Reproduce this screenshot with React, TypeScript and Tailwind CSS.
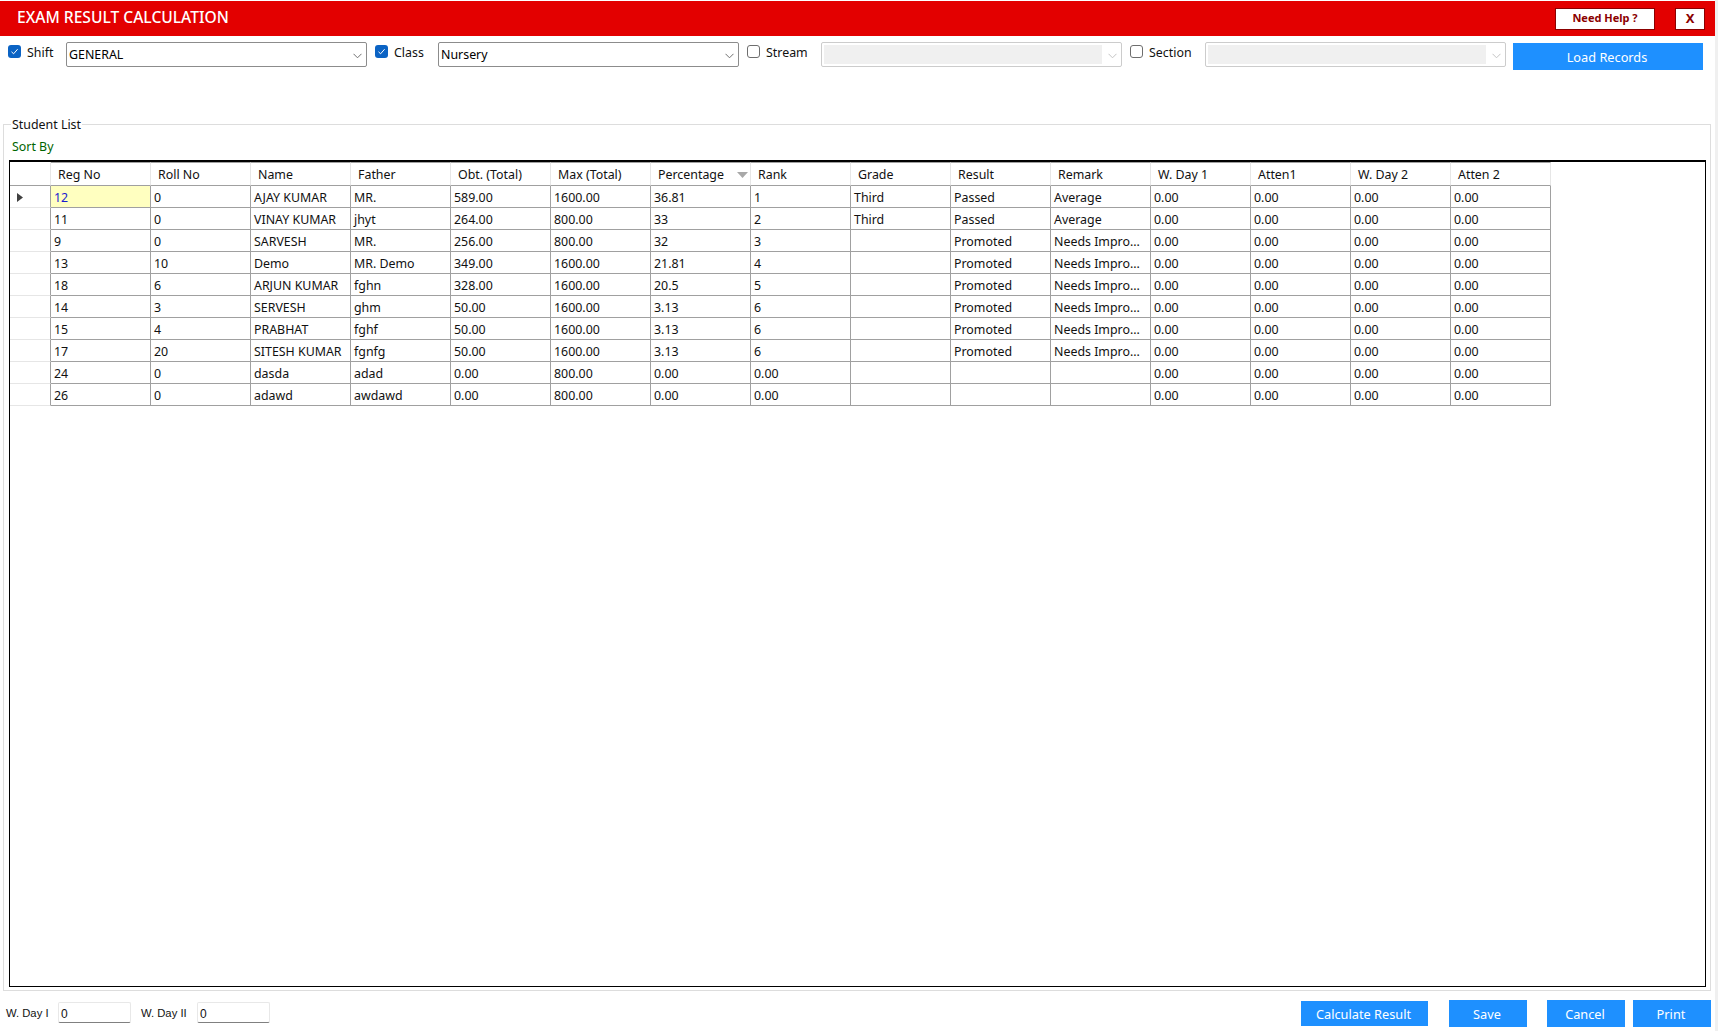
import React from "react";

const columns = ["Reg No","Roll No","Name","Father","Obt. (Total)","Max (Total)","Percentage","Rank","Grade","Result","Remark","W. Day 1","Atten1","W. Day 2","Atten 2"];
const z = ["0.00","0.00","0.00","0.00"];
const rows: string[][] = [
  ["12","0","AJAY KUMAR","MR.","589.00","1600.00","36.81","1","Third","Passed","Average",...z],
  ["11","0","VINAY KUMAR","jhyt","264.00","800.00","33","2","Third","Passed","Average",...z],
  ["9","0","SARVESH","MR.","256.00","800.00","32","3","","Promoted","Needs Impro...",...z],
  ["13","10","Demo","MR. Demo","349.00","1600.00","21.81","4","","Promoted","Needs Impro...",...z],
  ["18","6","ARJUN KUMAR","fghn","328.00","1600.00","20.5","5","","Promoted","Needs Impro...",...z],
  ["14","3","SERVESH","ghm","50.00","1600.00","3.13","6","","Promoted","Needs Impro...",...z],
  ["15","4","PRABHAT","fghf","50.00","1600.00","3.13","6","","Promoted","Needs Impro...",...z],
  ["17","20","SITESH KUMAR","fgnfg","50.00","1600.00","3.13","6","","Promoted","Needs Impro...",...z],
  ["24","0","dasda","adad","0.00","800.00","0.00","0.00","","","",...z],
  ["26","0","adawd","awdawd","0.00","800.00","0.00","0.00","","","",...z],
];

function Check({ on, className = "" }: { on: boolean; className?: string }) {
  return on ? (
    <div className={`mt-[3px] w-[13px] h-[13px] shrink-0 rounded-[3px] bg-[#0b63c4] flex items-center justify-center ${className}`}>
      <svg width="9" height="9" viewBox="0 0 9 9" fill="none"><path d="M1.5 4.8 3.6 6.8 7.6 2.2" stroke="#ffffff" strokeWidth="1" /></svg>
    </div>
  ) : (
    <div className={`mt-[3px] w-[13px] h-[13px] shrink-0 rounded-[3px] border border-[#6e6e6e] bg-white ${className}`} />
  );
}

function Chevron({ color }: { color: string }) {
  return (
    <svg width="9" height="6" viewBox="0 0 9 6" fill="none"><path d="M0.5 0.8 4.5 4.8 8.5 0.8" stroke={color} strokeWidth="1" /></svg>
  );
}

function Combo({ value, disabled }: { value?: string; disabled?: boolean }) {
  return (
    <div className={`relative w-[301px] h-[25px] shrink-0 rounded-[2px] border bg-white flex items-center ${disabled ? "border-[#cccccc]" : "border-[#8c8c8c]"}`}>
      {disabled ? (
        <div className="ml-[2px] mr-[19px] h-[19px] flex-1 bg-[#f0f0f0]" />
      ) : (
        <span className="flex-1 pl-[2px] pt-[2px] text-[12.4px] text-black leading-none">{value}</span>
      )}
      <div className="absolute right-[4px] top-[10px] flex"><Chevron color={disabled ? "#c4c4c4" : "#707070"} /></div>
    </div>
  );
}

function BlueButton({ label, className }: { label: string; className: string }) {
  return <div className={`flex items-center justify-center bg-[#1e90ff] text-white text-[12.75px] pt-[2px] pr-[2px] ${className}`}>{label}</div>;
}

export default function App() {
  return (
    <div className="flex w-[1718px] h-[1031px] overflow-hidden bg-white font-['Noto_Sans','Open_Sans',sans-serif]">
      <div className="w-[1715px] shrink-0 flex flex-col">
        <div className="mt-[1px] h-[35px] shrink-0 bg-[#e30000] flex items-center pl-[17px] pr-[10px]">
          <span className="text-white text-[15.6px] font-medium leading-none pb-[2px]">EXAM RESULT CALCULATION</span>
          <div className="ml-auto flex gap-[20px]">
            <div className="w-[100px] h-[22px] bg-white border border-[#8b0000] flex items-center justify-center text-[11px] font-bold text-[#8b0000]">Need Help ?</div>
            <div className="w-[30px] h-[22px] bg-white border border-[#8b0000] flex items-center justify-center text-[13px] font-bold text-[#8b0000]">X</div>
          </div>
        </div>

        <div className="h-[88px] shrink-0 flex items-start pt-[6px] text-[12.4px] text-[#111111]">
          <Check on className="ml-[8px]" />
          <span className="ml-[6px] w-[39px] mt-[2px] leading-[18px]">Shift</span>
          <Combo value="GENERAL" />
          <Check on className="ml-[8px]" />
          <span className="ml-[6px] w-[44px] mt-[2px] leading-[18px]">Class</span>
          <Combo value="Nursery" />
          <Check on={false} className="ml-[8px]" />
          <span className="ml-[6px] w-[55px] mt-[2px] leading-[18px]">Stream</span>
          <Combo disabled />
          <Check on={false} className="ml-[8px]" />
          <span className="ml-[6px] w-[56px] mt-[2px] leading-[18px]">Section</span>
          <Combo disabled />
          <BlueButton label="Load Records" className="ml-[7px] mt-[1px] w-[190px] h-[27px]" />
        </div>

        <div className="relative ml-[3px] w-[1708px] h-[867px] shrink-0 border border-[#dddddd]">
          <span className="absolute left-[7px] top-[-9px] bg-white px-[1px] text-[12.4px] leading-[18px] text-[#111111]">Student List</span>
          <div className="h-[35px] pl-[8px] pt-[13px] text-[12.4px] leading-[18px] text-[#006400]">Sort By</div>
          <div className="ml-[5px] w-[1697px] h-[827px] border border-black border-t-2">
            <div className="flex h-[24px]">
              <div className="w-[41px] shrink-0 border-r border-[#e6e6e6] border-b border-b-[#a0a0a0]" />
              {columns.map((c) => (
                <div key={c} className="relative w-[100px] shrink-0 h-[24px] pl-[7px] pt-[2px] flex items-center border-r border-r-[#e6e6e6] border-b border-b-[#a0a0a0] border-t border-t-[#a0a0a0] text-[12.4px] text-[#111111]">
                  {c}
                  {c === "Percentage" && (
                    <svg className="absolute left-[86px] top-[9px]" width="11" height="6" viewBox="0 0 11 6"><path d="M0 0H11L5.5 6Z" fill="#a8a8a8" /></svg>
                  )}
                </div>
              ))}
            </div>
            {rows.map((r, i) => (
              <div key={i} className="flex h-[22px]">
                <div className="w-[41px] shrink-0 pl-[7px] pt-[2px] flex items-center border-r border-r-[#a0a0a0] border-b border-b-[#e6e6e6]">
                  {i === 0 && <svg width="6" height="9" viewBox="0 0 6 9"><path d="M0 0 6 4.5 0 9Z" fill="#404040" /></svg>}
                </div>
                {r.map((v, j) => (
                  <div key={j} className={`w-[100px] shrink-0 pl-[3px] pt-[4px] flex items-center border-r border-b border-[#a0a0a0] text-[12.4px] whitespace-nowrap overflow-hidden ${i === 0 && j === 0 ? "bg-[#ffffc0] text-[#1a1ad0]" : "text-[#111111]"}`}>{v}</div>
                ))}
              </div>
            ))}
          </div>
        </div>

        <div className="flex-1 flex items-start justify-between pr-[4px]">
          <div className="flex items-start pt-[11px] font-['Liberation_Sans',sans-serif] text-[11.25px] text-[#111111]">
            <span className="ml-[6px] w-[52px] leading-[22px]">W. Day I</span>
            <div className="w-[73px] h-[21px] pl-[2px] pt-[2px] flex items-center rounded-[2px] border border-[#e8e8e8] border-b-[#808080] bg-white text-[12px]">0</div>
            <span className="ml-[10px] w-[56px] leading-[22px]">W. Day II</span>
            <div className="w-[73px] h-[21px] pl-[2px] pt-[2px] flex items-center rounded-[2px] border border-[#e8e8e8] border-b-[#808080] bg-white text-[12px]">0</div>
          </div>
          <div className="flex items-start pt-[9px]">
            <BlueButton label="Calculate Result" className="mt-[1px] w-[127px] h-[25px]" />
            <BlueButton label="Save" className="ml-[21px] w-[78px] h-[27px]" />
            <BlueButton label="Cancel" className="ml-[20px] w-[78px] h-[27px]" />
            <BlueButton label="Print" className="ml-[8px] w-[78px] h-[27px]" />
          </div>
        </div>
      </div>
      <div className="flex-1 bg-[#f0f0f0]" />
    </div>
  );
}
